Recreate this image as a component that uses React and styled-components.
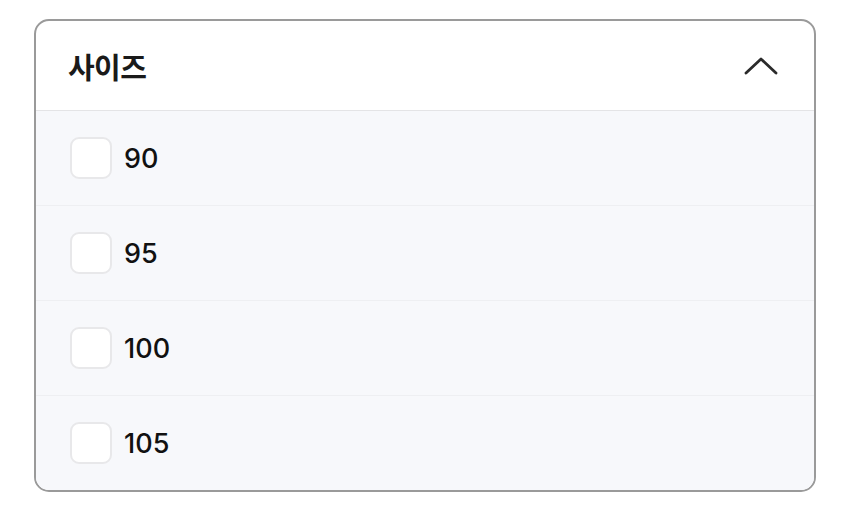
import React from 'react'
import styled, { createGlobalStyle } from 'styled-components'

const GlobalStyle = createGlobalStyle`
  html, body {
    margin: 0;
    padding: 0;
    background: #ffffff;
  }
  body {
    font-family: Inter, "Noto Sans", "Noto Sans CJK KR", sans-serif;
  }
`

const sizes = ['90', '95', '100', '105']

const App = () => {
  return (
    <>
      <GlobalStyle />
      <Page>
        <Card>
          <Header>
            <Title>사이즈</Title>
            <Chevron width="34" height="20" viewBox="0 0 34 20">
              <path d="M2 17 L17 3 L32 17" fill="none" stroke="#2b2b2b" strokeWidth="2.8" strokeLinecap="round" strokeLinejoin="round" />
            </Chevron>
          </Header>
          <List>
            {sizes.map((size) => (
              <Row key={size}>
                <Box />
                <Label>{size}</Label>
              </Row>
            ))}
          </List>
        </Card>
      </Page>
    </>
  )
}

export default App

const Page = styled.div`
  padding: 19px 0 0 34px;
`

const Card = styled.div`
  width: 782px;
  box-sizing: border-box;
  border: 2px solid #9a9a9a;
  border-radius: 15px;
  overflow: hidden;
  background: #ffffff;
`

const Header = styled.div`
  height: 89px;
  display: flex;
  align-items: center;
  justify-content: space-between;
  padding: 0 36px 0 32px;
  border-bottom: 1px solid #e4e4e6;
`

const Title = styled.span`
  font-family: "Noto Sans CJK KR", sans-serif;
  font-size: 29px;
  font-weight: 700;
  color: #1a1a1a;
  letter-spacing: -0.6px;
`

const Chevron = styled.svg`
  display: block;
`

const List = styled.div`
  display: flex;
  flex-direction: column;
  background: #f7f8fb;
`

const Row = styled.div`
  height: 94px;
  display: flex;
  align-items: center;
  gap: 12px;
  padding-left: 34px;

  & + & {
    border-top: 1px solid #eeeff2;
  }
`

const Box = styled.span`
  width: 38px;
  height: 38px;
  border: 2px solid #e8e8ea;
  border-radius: 9px;
  background: #ffffff;
`

const Label = styled.span`
  font-family: Inter, "Noto Sans", sans-serif;
  font-size: 27px;
  font-weight: 500;
  color: #111111;
`
